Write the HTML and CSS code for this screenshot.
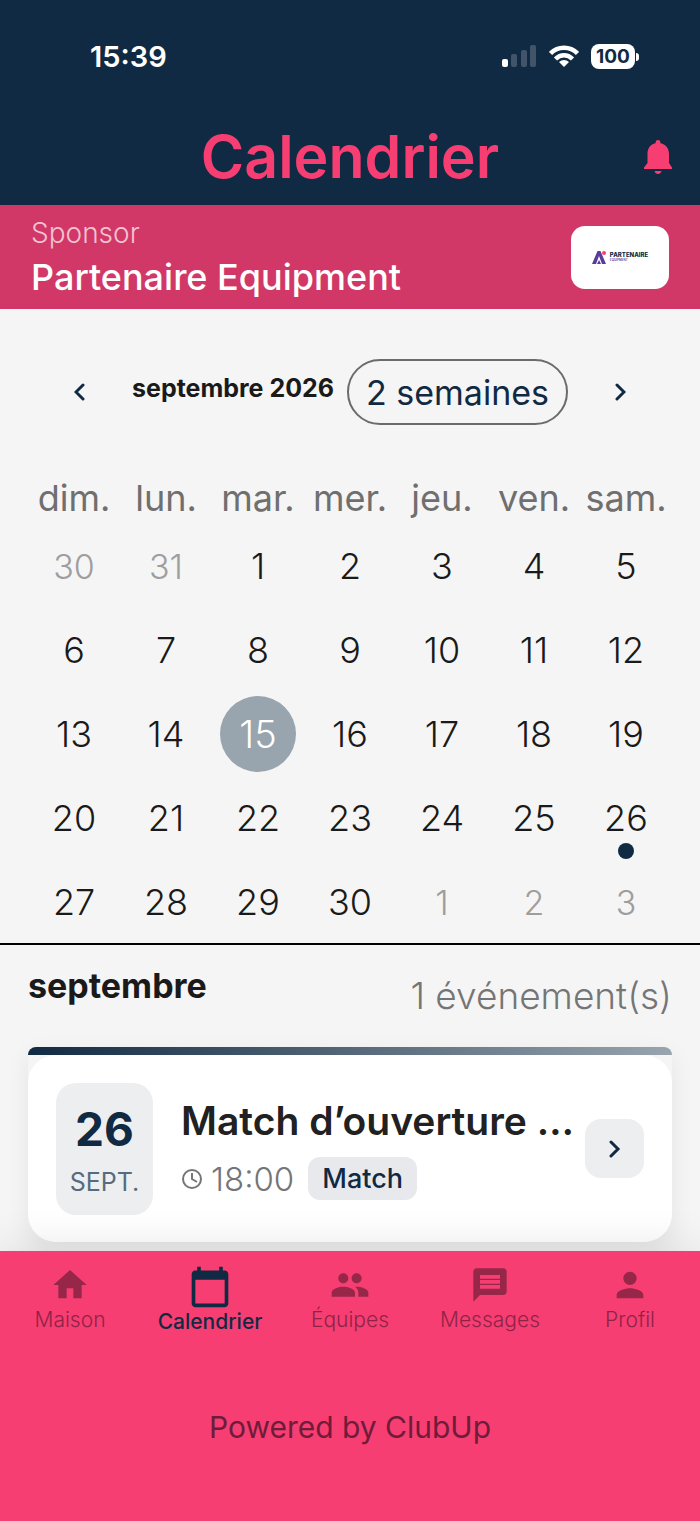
FILE: index.html
```html
<!DOCTYPE html>
<html lang="fr">
<head>
  <meta charset="UTF-8">
  <meta name="viewport" content="width=device-width, initial-scale=1">
  <title>Calendrier</title>
  <link rel="stylesheet" href="styles.css">
</head>
<body>
  <header class="header">
    <div class="status-bar">
      <span class="clock">15:39</span>
      <div class="status-icons">
        <svg width="35" height="23" viewBox="0 0 35 23">
          <rect x="0" y="14" width="6" height="8" rx="2" fill="#fff"/>
          <g fill="#41546a">
            <rect x="9" y="9" width="6" height="13" rx="2"/>
            <rect x="19" y="5" width="6" height="17" rx="2"/>
            <rect x="28" y="0" width="6" height="22" rx="2"/>
          </g>
        </svg>
        <svg width="30" height="22" viewBox="0 0 30 22">
          <g fill="none" stroke="#fff" stroke-width="4.500">
            <path d="M1.500 8.500C9 .8 21 .8 28.500 8.500"/>
            <path d="M6.500 14C11.500 9 18.500 9 23.500 14"/>
          </g>
          <path d="M15 22l-5-5c3-2.700 7-2.700 10 0z" fill="#fff"/>
        </svg>
        <div class="battery">100</div>
      </div>
    </div>
    <div class="title-bar">
      <h1>Calendrier</h1>
      <button type="button" class="bell" aria-label="Notifications">
        <svg width="28" height="34" viewBox="0 0 28 34" fill="#f63e73">
          <path d="M14 0c1.700 0 2.500 1.200 2.500 3.300C21.500 4.500 25 8 25 14v9l3 4.500V29H0v-1.500L3.500 23v-9c0-6 3-9.500 8-10.700C11.500 1.200 12.300 0 14 0z"/>
          <path d="M10.500 31h7c-.5 2-1.800 3-3.500 3s-3-1-3.500-3z"/>
        </svg>
      </button>
    </div>
  </header>

  <section class="sponsor">
    <div>
      <div class="sponsor-label">Sponsor</div>
      <div class="sponsor-name">Partenaire Equipment</div>
    </div>
    <div class="sponsor-logo">
      <svg width="14" height="14" viewBox="0 0 14 14">
        <path d="M0 14L5.500 1h3L14 14h-4L7 6l-3 8z" fill="#5a3d9a"/>
        <path d="M5 14l2-4 2 4z" fill="#5a3d9a"/>
        <circle cx="12" cy="3" r="2" fill="#f63e73"/>
      </svg>
      <div>
        <div class="logo-name">PARTENAIRE</div>
        <div class="logo-sub">EQUIPMENT</div>
      </div>
    </div>
  </section>

  <main>
    <section class="calendar">
      <div class="calendar-header">
        <button type="button" class="arrow" aria-label="Mois précédent">
          <svg width="12" height="18" viewBox="0 0 12 18"><path d="M9 2L2 9l7 7"/></svg>
        </button>
        <h2 class="month">septembre 2026</h2>
        <button type="button" class="format">2 semaines</button>
        <button type="button" class="arrow" aria-label="Mois suivant">
          <svg width="12" height="18" viewBox="0 0 12 18"><path d="M3 2l7 7-7 7"/></svg>
        </button>
      </div>

      <table class="days">
        <thead>
          <tr><th>dim.</th><th>lun.</th><th>mar.</th><th>mer.</th><th>jeu.</th><th>ven.</th><th>sam.</th></tr>
        </thead>
        <tbody>
          <tr><td class="outside">30</td><td class="outside">31</td><td>1</td><td>2</td><td>3</td><td>4</td><td>5</td></tr>
          <tr><td>6</td><td>7</td><td>8</td><td>9</td><td>10</td><td>11</td><td>12</td></tr>
          <tr><td>13</td><td>14</td><td><div class="today">15</div></td><td>16</td><td>17</td><td>18</td><td>19</td></tr>
          <tr><td>20</td><td>21</td><td>22</td><td>23</td><td>24</td><td>25</td><td class="has-event">26</td></tr>
          <tr><td>27</td><td>28</td><td>29</td><td>30</td><td class="outside">1</td><td class="outside">2</td><td class="outside">3</td></tr>
        </tbody>
      </table>
    </section>

    <section class="events">
      <div class="events-header">
        <h2>septembre</h2>
        <span class="count">1 événement(s)</span>
      </div>
      <article class="event">
        <div class="event-bar"></div>
        <div class="event-body">
          <div class="event-date">
            <span class="event-day">26</span>
            <span class="event-month">SEPT.</span>
          </div>
          <div class="event-info">
            <h3>Match d’ouverture …</h3>
            <div class="event-meta">
              <svg width="22" height="22" viewBox="0 0 22 22" fill="none" stroke="#757575" stroke-width="2">
                <circle cx="11" cy="11" r="9"/>
                <path d="M11 5v6l5 3"/>
              </svg>
              <span class="event-time">18:00</span>
              <span class="tag">Match</span>
            </div>
          </div>
          <button type="button" class="open" aria-label="Ouvrir">
            <svg width="12" height="18" viewBox="0 0 12 18"><path d="M2 2l7 7-7 7"/></svg>
          </button>
        </div>
      </article>
    </section>
  </main>

  <footer class="footer">
    <nav class="tabs">
      <a href="#" class="tab">
        <svg width="40" height="40" viewBox="0 0 24 24"><path d="M10 20v-6h4v6h5v-8h3L12 3 2 12h3v8z"/></svg>
        <span>Maison</span>
      </a>
      <a href="#" class="tab active">
        <svg width="44" height="44" viewBox="0 0 24 24"><path d="M20 3h-1V1h-2v2H7V1H5v2H4c-1.100 0-2 .9-2 2v16c0 1.100.9 2 2 2h16c1.100 0 2-.9 2-2V5c0-1.100-.9-2-2-2zm0 18H4V8h16v13z"/></svg>
        <span>Calendrier</span>
      </a>
      <a href="#" class="tab">
        <svg width="40" height="40" viewBox="0 0 24 24"><path d="M16 11c1.660 0 2.990-1.340 2.990-3S17.660 5 16 5s-3 1.340-3 3 1.340 3 3 3zm-8 0c1.660 0 2.990-1.340 2.990-3S9.660 5 8 5 5 6.340 5 8s1.340 3 3 3zm0 2c-2.330 0-7 1.170-7 3.500V19h14v-2.500c0-2.330-4.670-3.500-7-3.500zm8 0c-.29 0-.62.020-.97.050 1.160.84 1.970 1.970 1.970 3.450V19h6v-2.500c0-2.330-4.670-3.500-7-3.500z"/></svg>
        <span>Équipes</span>
      </a>
      <a href="#" class="tab">
        <svg width="40" height="40" viewBox="0 0 24 24"><path d="M20 2H4c-1.100 0-2 .9-2 2v18l4-4h14c1.100 0 2-.9 2-2V4c0-1.100-.9-2-2-2zM6 6h12v2.300H6zm0 3h12v2.300H6zm0 3h12v2.300H6z" fill-rule="evenodd"/></svg>
        <span>Messages</span>
      </a>
      <a href="#" class="tab">
        <svg width="40" height="40" viewBox="0 0 24 24"><path d="M12 12c2.210 0 4-1.790 4-4s-1.790-4-4-4-4 1.790-4 4 1.790 4 4 4zm0 2c-2.670 0-8 1.340-8 4v2h16v-2c0-2.660-5.330-4-8-4z"/></svg>
        <span>Profil</span>
      </a>
    </nav>
    <p class="powered">Powered by ClubUp</p>
  </footer>
</body>
</html>
```
FILE: styles.css
```css
* {
  box-sizing: border-box;
}

body {
  margin: 0;
  min-height: 100vh;
  display: flex;
  flex-direction: column;
  font-family: Inter, "Open Sans", sans-serif;
  background-color: #f5f5f5;
  color: #1a1a1a;
}

h1, h2, h3, p {
  margin: 0;
}

svg {
  display: block;
  flex-shrink: 0;
}

button {
  font-family: inherit;
  border: none;
  background: none;
  padding: 0;
  cursor: pointer;
}

.header {
  background-color: #112a43;
}

.status-bar {
  display: flex;
  justify-content: space-between;
  align-items: center;
  height: 112px;
  padding: 0 65px 0 90px;
  color: #fff;
}

.clock {
  font-size: 29px;
  font-weight: 600;
}

.status-icons {
  display: flex;
  align-items: center;
  gap: 12px;
}

.battery {
  position: relative;
  width: 44px;
  height: 25px;
  border-radius: 8px;
  background-color: #fff;
  color: #112a43;
  font-size: 19px;
  font-weight: 700;
  line-height: 25px;
  text-align: center;
}

.battery::after {
  content: "";
  position: absolute;
  top: 9px;
  right: -4px;
  width: 3px;
  height: 8px;
  border-radius: 0 3px 3px 0;
  background-color: #fff;
}

.title-bar {
  display: grid;
  grid-template-columns: 1fr auto 1fr;
  align-items: center;
  height: 93px;
  padding: 0 28px 4px;
}

.title-bar h1 {
  grid-column: 2;
  color: #f63e73;
  font-size: 59px;
  font-weight: 600;
  line-height: 88px;
}

.bell {
  justify-self: end;
}

.sponsor {
  display: flex;
  justify-content: space-between;
  align-items: center;
  height: 104px;
  padding: 0 31px;
  background-color: #d13867;
  color: #fff;
}

.sponsor-label {
  font-size: 28px;
  font-weight: 300;
  line-height: 44px;
  color: #f3c3d1;
}

.sponsor-name {
  font-size: 36px;
  font-weight: 500;
  line-height: 44px;
  padding-bottom: 4px;
}

.sponsor-logo {
  display: flex;
  justify-content: center;
  align-items: center;
  gap: 4px;
  width: 98px;
  height: 63px;
  border-radius: 14px;
  background-color: #fff;
}

.logo-name {
  color: #112a43;
  font-size: 6px;
  font-weight: 800;
  line-height: 7px;
}

.logo-sub {
  color: #5a3d9a;
  font-size: 3px;
  font-weight: 600;
  line-height: 5px;
}

.calendar {
  padding: 50px 28px 0;
  border-bottom: 2px solid #000;
}

.calendar-header {
  display: flex;
  align-items: center;
  height: 66px;
}

.arrow {
  display: flex;
  justify-content: center;
  align-items: center;
  width: 104px;
  height: 66px;
}

.arrow path,
.open path {
  fill: none;
  stroke: #112a43;
  stroke-width: 3;
  stroke-linecap: round;
}

.month {
  flex: 1;
  font-size: 25px;
  font-weight: 700;
  line-height: 32px;
  padding-bottom: 8px;
  white-space: nowrap;
}

.format {
  width: 221px;
  height: 66px;
  border: 2px solid #6b6b6b;
  border-radius: 33px;
  color: #112a43;
  font-size: 34px;
  font-weight: 400;
}

.days {
  width: 100%;
  margin-top: 48px;
  border-collapse: collapse;
  table-layout: fixed;
  font-size: 36px;
  text-align: center;
}

.days th {
  height: 50px;
  padding: 0;
  color: #6f6f6f;
  font-weight: 400;
}

.days td {
  height: 84px;
  padding: 2px 0 0;
  font-weight: 300;
}

.days .outside {
  color: #9e9e9e;
  font-size: 34px;
}

.today {
  width: 76px;
  height: 76px;
  margin: 0 auto;
  border-radius: 50%;
  background-color: #98a4ae;
  color: #fff;
  font-size: 38px;
  line-height: 76px;
}

.has-event {
  position: relative;
}

.has-event::after {
  content: "";
  position: absolute;
  bottom: 0;
  left: 50%;
  width: 16px;
  height: 16px;
  margin-left: -8px;
  border-radius: 50%;
  background-color: #112a43;
}

.events {
  padding: 0 28px 9px;
}

.events-header {
  display: flex;
  justify-content: space-between;
  height: 102px;
  padding-top: 20px;
}

.events-header h2 {
  font-size: 34px;
  font-weight: 700;
  line-height: 42px;
}

.count {
  color: #757575;
  font-size: 37px;
  font-weight: 300;
  line-height: 62px;
}

.event {
  border-radius: 8px 8px 28px 28px;
  box-shadow: 0 8px 24px rgba(0, 0, 0, 0.07);
}

.event-bar {
  height: 8px;
  border-radius: 8px 8px 0 0;
  background: linear-gradient(to right, #112a43, #98a4ae);
}

.event-body {
  display: flex;
  align-items: center;
  height: 187px;
  padding: 0 28px;
  border-radius: 28px;
  background-color: #fff;
}

.event-date {
  display: flex;
  flex-direction: column;
  align-items: center;
  justify-content: center;
  flex-shrink: 0;
  width: 97px;
  height: 132px;
  padding-top: 6px;
  border-radius: 20px;
  background-color: #eceeef;
  color: #112a43;
}

.event-day {
  font-size: 46px;
  font-weight: 700;
  line-height: 60px;
}

.event-month {
  color: #566b7f;
  font-size: 25px;
  font-weight: 400;
  line-height: 46px;
}

.event-info {
  flex: 1;
  min-width: 0;
  padding-left: 28px;
}

.event-info h3 {
  color: #212121;
  font-size: 39px;
  font-weight: 600;
  line-height: 60px;
  white-space: nowrap;
}

.event-meta {
  display: flex;
  align-items: center;
  height: 56px;
}

.event-time {
  margin: 0 14px 0 8px;
  color: #757575;
  font-size: 33px;
  font-weight: 300;
}

.tag {
  padding: 0 14px;
  border-radius: 12px;
  background-color: #e7e9ed;
  color: #112a43;
  font-size: 27px;
  font-weight: 500;
  line-height: 43px;
}

.open {
  display: flex;
  justify-content: center;
  align-items: center;
  flex-shrink: 0;
  width: 59px;
  height: 59px;
  border-radius: 16px;
  background-color: #eceeef;
}

.footer {
  position: relative;
  flex: 1;
  background-color: #f63e73;
  box-shadow: 0 -4px 40px rgba(0, 0, 0, 0.1);
}

.tabs {
  display: flex;
  height: 98px;
}

.tab {
  flex: 1;
  display: flex;
  flex-direction: column;
  align-items: center;
  padding-top: 14px;
  color: #8f2346;
  font-size: 21px;
  font-weight: 300;
  line-height: 30px;
  text-decoration: none;
}

.tab svg {
  fill: #972749;
}

.tab.active {
  color: #112a43;
  font-weight: 500;
}

.tab.active svg {
  fill: #112a43;
  margin-bottom: -2px;
}

.powered {
  padding-top: 56px;
  color: #6e1c39;
  font-size: 30px;
  line-height: 44px;
  text-align: center;
}
```
